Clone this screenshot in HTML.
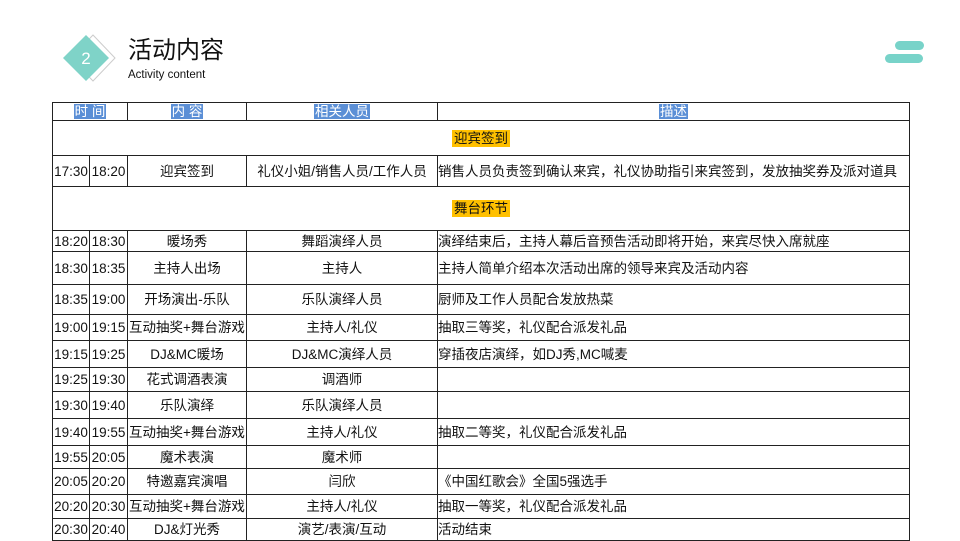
<!DOCTYPE html>
<html><head><meta charset="utf-8"><style>
body{margin:0;width:960px;height:540px;overflow:hidden;background:#fff;position:relative;font-family:"Liberation Sans","Noto Sans CJK SC",sans-serif;}
.t{position:absolute;left:52px;top:102px;border-collapse:collapse;table-layout:fixed;font-size:13.5px;color:#111;}
.t td{border:1px solid #222;padding:0;text-align:center;white-space:nowrap;overflow:hidden;line-height:15px}
.t td.d{text-align:left;padding-left:0}
.h span{background:#5b8fd6;color:#fff;padding:0 1px}
.y{background:#ffc000;padding:1px 2px}
</style></head><body>
<svg style="position:absolute;left:60px;top:33px" width="56" height="52">
<polygon points="33,2 55,25 33,48 11,25" fill="#fff" stroke="#ccc" stroke-width="1"/>
<polygon points="26,2 49,25 26,48 3,25" fill="#7fd3c8"/>
<text x="26" y="31" fill="#fff" font-size="17" text-anchor="middle" font-family="Liberation Sans">2</text>
</svg>
<div style="position:absolute;left:128px;top:36px;font-size:24px;color:#111;line-height:30px">活动内容</div>
<div style="position:absolute;left:128px;top:68px;font-size:11.5px;color:#111;line-height:14px">Activity content</div>
<div style="position:absolute;left:895px;top:41px;width:29px;height:9px;border-radius:5px;background:#78d3c9"></div>
<div style="position:absolute;left:885px;top:54px;width:38px;height:9px;border-radius:5px;background:#78d3c9"></div>
<table class="t">
<colgroup><col style="width:37px"><col style="width:38px"><col style="width:119px"><col style="width:191px"><col style="width:472px"></colgroup>
<tr class="h" style="height:18px"><td colspan="2"><span>时 间</span></td><td><span>内 容</span></td><td><span>相关人员</span></td><td><span>描述</span></td></tr>
<tr style="height:35px"><td colspan="5"><span class="y">迎宾签到</span></td></tr>
<tr style="height:31px"><td>17:30</td><td>18:20</td><td>迎宾签到</td><td>礼仪小姐/销售人员/工作人员</td><td class="d">销售人员负责签到确认来宾，礼仪协助指引来宾签到，发放抽奖券及派对道具</td></tr>
<tr style="height:44px"><td colspan="5"><span class="y">舞台环节</span></td></tr>
<tr style="height:21px"><td>18:20</td><td>18:30</td><td>暖场秀</td><td>舞蹈演绎人员</td><td class="d">演绎结束后，主持人幕后音预告活动即将开始，来宾尽快入席就座</td></tr>
<tr style="height:33px"><td>18:30</td><td>18:35</td><td>主持人出场</td><td>主持人</td><td class="d">主持人简单介绍本次活动出席的领导来宾及活动内容</td></tr>
<tr style="height:30px"><td>18:35</td><td>19:00</td><td>开场演出-乐队</td><td>乐队演绎人员</td><td class="d">厨师及工作人员配合发放热菜</td></tr>
<tr style="height:26px"><td>19:00</td><td>19:15</td><td>互动抽奖+舞台游戏</td><td>主持人/礼仪</td><td class="d">抽取三等奖，礼仪配合派发礼品</td></tr>
<tr style="height:27px"><td>19:15</td><td>19:25</td><td>DJ&amp;MC暖场</td><td>DJ&amp;MC演绎人员</td><td class="d">穿插夜店演绎，如DJ秀,MC喊麦</td></tr>
<tr style="height:24px"><td>19:25</td><td>19:30</td><td>花式调酒表演</td><td>调酒师</td><td class="d"></td></tr>
<tr style="height:27px"><td>19:30</td><td>19:40</td><td>乐队演绎</td><td>乐队演绎人员</td><td class="d"></td></tr>
<tr style="height:27px"><td>19:40</td><td>19:55</td><td>互动抽奖+舞台游戏</td><td>主持人/礼仪</td><td class="d">抽取二等奖，礼仪配合派发礼品</td></tr>
<tr style="height:23px"><td>19:55</td><td>20:05</td><td>魔术表演</td><td>魔术师</td><td class="d"></td></tr>
<tr style="height:26px"><td>20:05</td><td>20:20</td><td>特邀嘉宾演唱</td><td>闫欣</td><td class="d">《中国红歌会》全国5强选手</td></tr>
<tr style="height:24px"><td>20:20</td><td>20:30</td><td>互动抽奖+舞台游戏</td><td>主持人/礼仪</td><td class="d">抽取一等奖，礼仪配合派发礼品</td></tr>
<tr style="height:22px"><td>20:30</td><td>20:40</td><td>DJ&amp;灯光秀</td><td>演艺/表演/互动</td><td class="d">活动结束</td></tr>
</table>
</body></html>
